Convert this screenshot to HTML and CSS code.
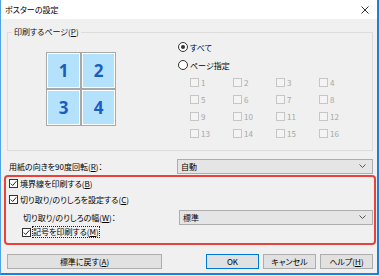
FILE: index.html
```
<!DOCTYPE html>
<html lang="ja">
<head>
    <meta charset="UTF-8">
    <title>ポスターの設定</title>
    <link rel="stylesheet" href="styles.css">
</head>
<body>
    <div class="window">
        <div class="titlebar">
            <span class="title">ポスターの設定</span>
            <svg class="close" width="8" height="8" viewBox="0 0 8 8"><path d="M0.5 0.5 L7.5 7.5 M7.5 0.5 L0.5 7.5" stroke="#333" stroke-width="1"/></svg>
        </div>
        <div class="content">
            <fieldset class="group">
                <legend>印刷するページ(<u>P</u>)</legend>
                <div class="group-body">
                    <div class="tiles">
                        <div class="tile">1</div>
                        <div class="tile">2</div>
                        <div class="tile">3</div>
                        <div class="tile">4</div>
                    </div>
                    <div class="pages">
                        <div class="radio-row"><span class="radio checked"></span>すべて</div>
                        <div class="radio-row"><span class="radio"></span>ページ指定</div>
                        <div class="page-grid" id="pageGrid"></div>
                    </div>
                </div>
            </fieldset>

            <div class="field-row">
                <span class="field-label">用紙の向きを90度回転(<u>R</u>)：</span>
                <div class="combo"><span>自動</span><svg width="7" height="4" viewBox="0 0 7 4"><path d="M0.5 0.5 L3.5 3.5 L6.5 0.5" fill="none" stroke="#555"/></svg></div>
            </div>

            <div class="highlight">
                <div class="check-row row-a"><span class="check on"></span>境界線を印刷する(<u>B</u>)</div>
                <div class="check-row row-b"><span class="check on"></span>切り取り/のりしろを設定する(<u>C</u>)</div>
                <div class="field-row sub">
                    <span class="field-label">切り取り/のりしろの幅(<u>W</u>)：</span>
                    <div class="combo"><span>標準</span><svg width="7" height="4" viewBox="0 0 7 4"><path d="M0.5 0.5 L3.5 3.5 L6.5 0.5" fill="none" stroke="#555"/></svg></div>
                </div>
                <div class="check-row row-d"><span class="check on"></span><span class="focus">記号を印刷する(<u>M</u>)</span></div>
            </div>

            <div class="buttons">
                <button class="btn wide">標準に戻す(<u>A</u>)</button>
                <div class="btn-group">
                    <button class="btn default">OK</button>
                    <button class="btn">キャンセル</button>
                    <button class="btn">ヘルプ(<u>H</u>)</button>
                </div>
            </div>
        </div>
    </div>
    <script>
        const pageGrid = document.getElementById('pageGrid');
        for (let i = 1; i <= 16; i++) {
            const item = document.createElement('div');
            item.className = 'page-item';
            item.innerHTML = '<span class="check off"></span>' + i;
            pageGrid.appendChild(item);
        }
    </script>
</body>
</html>
```

FILE: styles.css
```
body {
    margin: 0;
    background: white;
    font-family: "Noto Sans CJK JP", "Noto Sans", sans-serif;
    font-size: 8px;
    font-feature-settings: "palt";
    color: #000;
}
.window {
    width: 379px;
    height: 275px;
    box-sizing: border-box;
    background: #f0f0f0;
    border-left: 1px solid #4fa3e3;
    border-right: 2px solid #1883d7;
    border-bottom: 2px solid #1883d7;
    display: flex;
    flex-direction: column;
}
.titlebar {
    height: 19px;
    background: white;
    display: flex;
    align-items: center;
    justify-content: space-between;
    padding: 0 6px 0 4px;
}
.title {
    font-size: 8px;
}
.close {
    margin-right: 2px;
}
.content {
    padding: 7px 4px 0 6px;
}
.group {
    margin: 0;
    padding: 0;
    border: 1px solid #dcdcdc;
    min-width: 0;
}
.group legend {
    margin-left: 4px;
    padding: 0 2px;
    line-height: 12px;
    color: #111;
}
.group-body {
    display: flex;
    padding-bottom: 8px;
}
.tiles {
    display: grid;
    grid-template-columns: 35px 35px;
    grid-template-rows: 37px 37px;
    margin: 14px 0 0 38px;
}
.tile {
    border: 1px solid #a8a8a8;
    box-shadow: inset 0 0 0 1px white;
    background: #b4e1fb;
    display: flex;
    justify-content: center;
    align-items: center;
    font-family: "Open Sans", sans-serif;
    font-weight: 700;
    font-size: 17px;
    color: #1a5cc2;
    font-feature-settings: normal;
}
.pages {
    margin-left: 62px;
    display: flex;
    flex-direction: column;
}
.radio-row {
    height: 18px;
    display: flex;
    align-items: center;
}
.radio {
    width: 8px;
    height: 8px;
    border: 1px solid #333;
    border-radius: 50%;
    background: white;
    margin-right: 2px;
    display: flex;
    justify-content: center;
    align-items: center;
}
.radio.checked::after {
    content: "";
    width: 4px;
    height: 4px;
    border-radius: 50%;
    background: #333;
}
.page-grid {
    display: grid;
    grid-template-columns: repeat(4, 43px);
    grid-auto-rows: 17px;
    margin-left: 12px;
}
.page-item {
    display: flex;
    align-items: center;
    color: #a6a6a6;
}
.check {
    width: 7px;
    height: 7px;
    border: 1px solid #333;
    background: white;
    margin-right: 2px;
    flex-shrink: 0;
}
.check.off {
    border-color: #c6c6c6;
    background: #f4f4f4;
}
.check.on {
    background: white url("data:image/svg+xml;utf8,<svg xmlns='http://www.w3.org/2000/svg' width='7' height='7' viewBox='0 0 7 7'><path d='M0.8 3.6 L2.7 5.5 L6.3 1.3' fill='none' stroke='%23222' stroke-width='1'/></svg>") no-repeat center;
}
.field-row {
    display: flex;
    align-items: center;
    height: 16px;
    margin-top: 7px;
    padding-left: 2px;
}
.field-label {
    width: 168px;
}
.combo {
    flex: 1;
    height: 15px;
    box-sizing: border-box;
    background: #e5e5e5;
    border: 1px solid #adadad;
    display: flex;
    align-items: center;
    justify-content: space-between;
    padding: 0 6px 0 3px;
}
.highlight {
    margin: 1px -3px 0 -3px;
    border: 2px solid #e8423d;
    border-radius: 4px;
    padding: 0 1px 4px 3px;
}
.check-row {
    display: flex;
    align-items: center;
}
.row-a {
    height: 13px;
}
.row-b {
    height: 19px;
}
.field-row.sub {
    margin-top: 0;
    padding-left: 14px;
}
.field-row.sub .field-label {
    width: 156px;
}
.field-row.sub .combo {
    margin-right: 0;
}
.row-d {
    height: 14px;
    padding-left: 13px;
}
.focus {
    outline: 1px dotted #222;
    line-height: 10px;
}
.buttons {
    display: flex;
    justify-content: space-between;
    margin-top: 9px;
}
.btn-group {
    display: flex;
    gap: 4px;
}
.btn {
    height: 15px;
    width: 53px;
    padding: 0;
    background: #e1e1e1;
    border: 1px solid #adadad;
    font-family: "Noto Sans CJK JP", "Noto Sans", sans-serif;
    font-size: 8px;
    font-feature-settings: "palt";
    color: #000;
}
.btn.wide {
    width: 155px;
}
.btn.default {
    border-color: #0078d7;
}
```
